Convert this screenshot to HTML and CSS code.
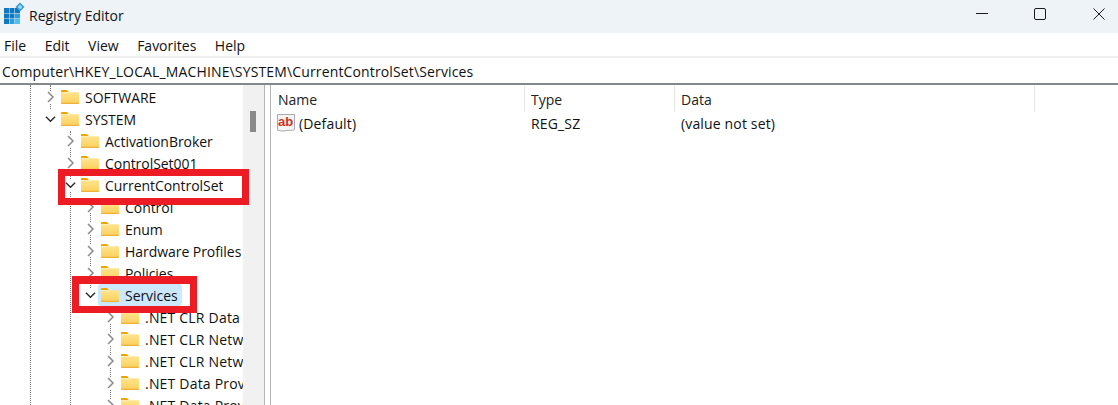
FILE: index.html
```html
<!DOCTYPE html>
<html lang="en">
<head>
<meta charset="utf-8">
<title>Registry Editor</title>
<link rel="stylesheet" href="styles.css">
</head>
<body>
<svg class="defs" width="0" height="0" aria-hidden="true">
  <defs>
    <linearGradient id="fg" x1="0" y1="0" x2="0" y2="1"><stop offset="0" stop-color="#ffe48c"/><stop offset="1" stop-color="#fbcf5c"/></linearGradient>
    <symbol id="folder" viewBox="0 0 18 15" preserveAspectRatio="none">
      <path d="M0 1.200C0 .5.500 0 1.200 0H6l2 2.400H0z" fill="#eba500"/>
      <path d="M0 2.500h17C17.600 2.500 18 2.900 18 3.500V14c0 .6-.4 1-1 1H1c-.6 0-1-.4-1-1z" fill="url(#fg)"/>
      <path d="M0 13.700h18V14c0 .6-.4 1-1 1H1c-.6 0-1-.4-1-1z" fill="#eeb23c"/>
      <path d="M0 2.500h8v1H0z" fill="#fff0bd"/>
    </symbol>
    <symbol id="right" viewBox="0 0 10 12"><path d="M2.500 1l5 5-5 5" fill="none" stroke="#8a8a8a" stroke-width="1.500"/></symbol>
    <symbol id="down" viewBox="0 0 12 10"><path d="M1 2.500l5 5 5-5" fill="none" stroke="#2b2b2b" stroke-width="1.500"/></symbol>
  </defs>
</svg>
<div class="window">
  <header class="titlebar">
    <svg class="appicon" width="24" height="24" viewBox="0 0 24 24">
      <path d="M0 7h5v5H0zM5.500 7h5v5h-5zM11 7h5v5h-5zM0 12.500h5v5H0zM5.500 12.500h5v5h-5zM0 18h5v5H0z" fill="#0f78bf"/>
      <path d="M11 12.500h5v5h-5zM5.500 18h5v5h-5z" fill="#2a9fe0"/>
      <path d="M11 18h5v5h-5z" fill="#52bff0"/>
      <path d="M16 1.500l4.500 4.500-4.500 4.500-4.500-4.500z" fill="#3a9fdc"/>
      <path d="M16 3.800l2.200 2.200-2.200 2.200-2.200-2.200z" fill="#a8dcf6"/>
    </svg>
    <span class="apptitle">Registry Editor</span>
    <div class="winbtns">
      <svg width="12" height="12" viewBox="0 0 12 12"><path d="M0 5.500h12" stroke="#1a1a1a" stroke-width="1"/></svg>
      <svg width="12" height="12" viewBox="0 0 12 12"><rect x=".5" y=".5" width="11" height="11" rx="1.500" fill="none" stroke="#1a1a1a"/></svg>
      <svg class="closebtn" width="12" height="12" viewBox="0 0 12 12"><path d="M.5.500l11 11M11.500.500l-11 11" stroke="#1a1a1a" stroke-width="1"/></svg>
    </div>
  </header>
  <nav class="menubar">
    <span>File</span><span>Edit</span><span>View</span><span>Favorites</span><span>Help</span>
  </nav>
  <div class="address">Computer\HKEY_LOCAL_MACHINE\SYSTEM\CurrentControlSet\Services</div>
  <main class="panes">
    <section class="tree">
      <div class="treelist">
        <i class="guide g30"></i><i class="guide g50"></i><i class="guide g70"></i><i class="guide g90"></i><i class="guide g110"></i>
        <div class="node l0"><svg class="chev"><use href="#right"/></svg><svg class="folder"><use href="#folder"/></svg><span class="label">SOFTWARE</span></div>
        <div class="node l0"><svg class="chev"><use href="#down"/></svg><svg class="folder"><use href="#folder"/></svg><span class="label">SYSTEM</span></div>
        <div class="node l1"><svg class="chev"><use href="#right"/></svg><svg class="folder"><use href="#folder"/></svg><span class="label">ActivationBroker</span></div>
        <div class="node l1"><svg class="chev"><use href="#right"/></svg><svg class="folder"><use href="#folder"/></svg><span class="label">ControlSet001</span></div>
        <div class="node l1"><svg class="chev"><use href="#down"/></svg><svg class="folder"><use href="#folder"/></svg><span class="label">CurrentControlSet</span><b class="mark mark-a"></b></div>
        <div class="node l2"><svg class="chev"><use href="#right"/></svg><svg class="folder"><use href="#folder"/></svg><span class="label">Control</span></div>
        <div class="node l2"><svg class="chev"><use href="#right"/></svg><svg class="folder"><use href="#folder"/></svg><span class="label">Enum</span></div>
        <div class="node l2"><svg class="chev"><use href="#right"/></svg><svg class="folder"><use href="#folder"/></svg><span class="label">Hardware Profiles</span></div>
        <div class="node l2"><svg class="chev"><use href="#right"/></svg><svg class="folder"><use href="#folder"/></svg><span class="label">Policies</span></div>
        <div class="node l2 selected"><svg class="chev"><use href="#down"/></svg><svg class="folder"><use href="#folder"/></svg><span class="label">Services</span><b class="mark mark-b"></b></div>
        <div class="node l3"><svg class="chev"><use href="#right"/></svg><svg class="folder"><use href="#folder"/></svg><span class="label">.NET CLR Data</span></div>
        <div class="node l3"><svg class="chev"><use href="#right"/></svg><svg class="folder"><use href="#folder"/></svg><span class="label">.NET CLR Networking</span></div>
        <div class="node l3"><svg class="chev"><use href="#right"/></svg><svg class="folder"><use href="#folder"/></svg><span class="label">.NET CLR Networking 4.0</span></div>
        <div class="node l3"><svg class="chev"><use href="#right"/></svg><svg class="folder"><use href="#folder"/></svg><span class="label">.NET Data Provider</span></div>
        <div class="node l3"><svg class="chev"><use href="#right"/></svg><svg class="folder"><use href="#folder"/></svg><span class="label">.NET Data Provider</span></div>
      </div>
      <div class="scrollbar"><div class="thumb"></div></div>
    </section>
    <section class="list">
      <div class="listhead">
        <div class="col c-name">Name</div>
        <div class="col c-type">Type</div>
        <div class="col c-data">Data</div>
      </div>
      <div class="listrow">
        <div class="cell c-name">
          <svg class="ab" width="20" height="20" viewBox="0 0 20 20">
            <path d="M1.500 1.500h17v15c-2.500 1.800-5 .3-8 1-3 .8-6 .6-9-.3z" fill="#f4f4f4" stroke="#a9a9a9"/>
            <text x="2" y="13" class="abtext">ab</text>
          </svg>
          <span>(Default)</span>
        </div>
        <div class="cell c-type">REG_SZ</div>
        <div class="cell c-data">(value not set)</div>
      </div>
    </section>
  </main>
</div>
</body>
</html>
```
FILE: styles.css
```css
* { box-sizing: border-box; }
html, body { margin: 0; padding: 0; height: 100%; overflow: hidden; background: #fff; }
body { font-family: "Open Sans", "Noto Sans", sans-serif; font-size: 14px; color: #111; }
.defs { position: absolute; }
.window { display: flex; flex-direction: column; height: 405px; overflow: hidden; }

.titlebar { height: 33px; flex: none; display: flex; align-items: center; background: #eef3f8; padding-left: 4px; }
.appicon { flex: none; margin-top: -7px; }
.apptitle { margin-left: 1px; margin-top: -2px; font-size: 14px; }
.winbtns { margin-left: auto; display: flex; gap: 46px; padding: 0 13px 5px 0; align-items: center; }
.closebtn { margin-left: 1px; }

.menubar { height: 25px; flex: none; display: flex; gap: 18.5px; align-items: center; padding-left: 4px; border-bottom: 2px solid #f0f0f0; }
.menubar span { position: relative; top: 1px; }

.address { height: 27px; flex: none; display: flex; align-items: center; padding: 1px 0 0 2px; border-bottom: 2px solid #84888c; letter-spacing: .14px; }

.panes { flex: 1; display: flex; min-height: 0; }
.tree { width: 265px; flex: none; display: flex; border-right: 1px solid #b5b5b5; }
.treelist { position: relative; width: 243px; flex: none; padding-top: 1px; }
.scrollbar { flex: 1; background: #f1f1f1; padding: 26px 7px 0; }
.thumb { width: 6px; height: 21px; background: #8a8a8a; }

.guide { position: absolute; top: 0; bottom: 0; border-left: 1px dotted #7a7a7a; }
.g30 { left: 30px; }
.g50 { left: 50px; bottom: auto; height: 24px; }
.g70 { left: 70px; top: 46px; }
.g90 { left: 90px; top: 113px; bottom: auto; height: 90px; }
.g110 { left: 110px; top: 221px; }

.node { position: relative; width: 243px; height: 22px; display: flex; align-items: center; white-space: nowrap; letter-spacing: -.05px; }
.l0 { padding-left: 45px; }
.l1 { padding-left: 65px; }
.l2 { padding-left: 85px; }
.l3 { padding-left: 105px; letter-spacing: .2px; }
.chev { position: relative; width: 11px; height: 12px; flex: none; background: #fff; }
.folder { position: relative; width: 18px; height: 14px; flex: none; margin-left: 5px; }
.label { position: relative; margin-left: 6px; min-width: 0; overflow: hidden; }
.selected::before { content: ""; position: absolute; left: 98px; width: 84px; top: 0; bottom: 0; background: #cce8ff; border-radius: 3px; }

.mark { position: absolute; border: 7px solid #ed1c24; z-index: 2; }
.mark-a { left: 58px; top: -5px; width: 191px; height: 36px; }
.mark-b { left: 72px; top: -8px; width: 125px; height: 37px; border-width: 8px 7px 7px; }

.list { flex: 1; margin-left: 5px; border-left: 1px solid #b5b5b5; }
.listhead { height: 26px; display: flex; margin-top: 1px; color: #222; }
.col { border-right: 1px solid #e5e5e5; padding-left: 7px; display: flex; align-items: center; }
.c-name { width: 254px; flex: none; }
.c-type { width: 150px; flex: none; }
.c-data { width: 360px; flex: none; }
.listrow { height: 22px; display: flex; align-items: center; }
.cell { display: flex; align-items: center; padding-left: 7px; letter-spacing: .15px; }
.col.c-type, .col.c-data, .cell.c-type, .cell.c-data { padding-left: 6px; }
.cell.c-name { padding-left: 5px; gap: 3px; }
.abtext { font-family: "Liberation Sans", sans-serif; font-size: 13px; font-weight: 700; letter-spacing: 0; fill: #d2321e; }
```
